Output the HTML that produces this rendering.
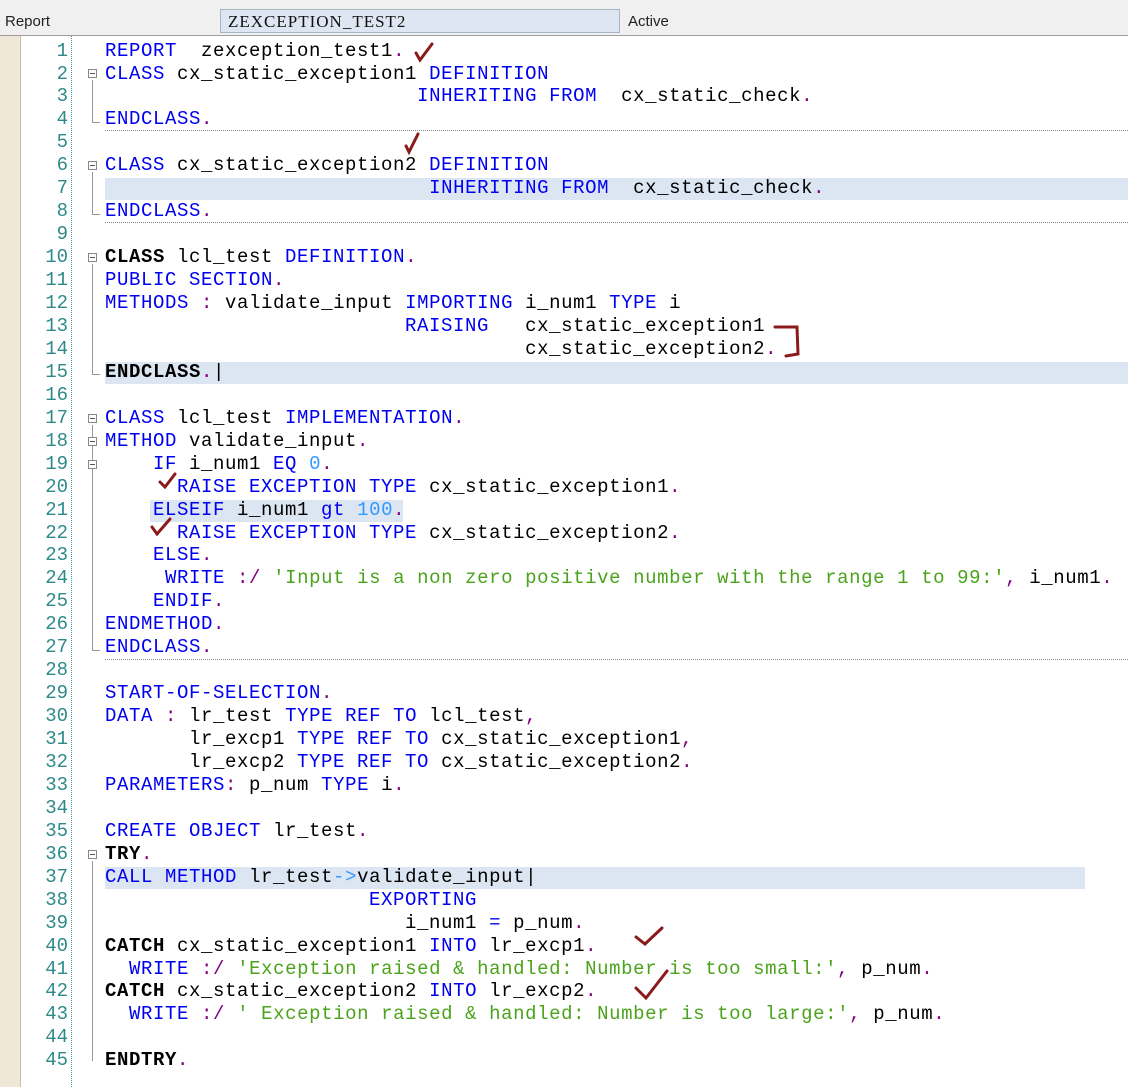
<!DOCTYPE html>
<html><head><meta charset="utf-8"><style>
body{margin:0;width:1128px;height:1087px;background:#fff;overflow:hidden;position:relative;font-family:"Liberation Sans",sans-serif}
#hdr{position:absolute;left:0;top:0;width:1128px;height:35px;background:#f0f0f0;border-bottom:1px solid #a0a0a0}
#hdr .l{position:absolute;top:13px;font-size:15px;color:#222}
#box{position:absolute;left:220px;top:9px;width:400px;height:24px;background:#dde6f2;border:1px solid #a8b4c4;box-sizing:border-box;font-family:"Liberation Serif",serif;font-size:17px;letter-spacing:1px;padding-left:7px;line-height:23px;color:#111}
#gut{position:absolute;left:0;top:36px;width:20px;height:1051px;background:#efe8d8;border-right:1px solid #c9c0a8}
#dots{position:absolute;left:71px;top:36px;height:1051px;border-left:1px dotted #3a9a9a}
.ln{position:absolute;left:20px;width:48px;text-align:right;font-family:"Liberation Mono",monospace;font-size:19px;color:#2e8a8a}
.c{position:absolute;left:105px;white-space:pre;font-family:"Liberation Mono",monospace;font-size:19px;letter-spacing:0.6px;color:#000;height:23px;line-height:23px}
.k{color:#0000f0}.p{color:#800080}.s{color:#4aa31a}.n{color:#3399ff}.b{font-weight:bold}
.hl{position:absolute;background:#dce6f2;height:22px}
.sep{position:absolute;left:105px;right:0;border-top:1px dotted #888}
.fb{position:absolute;left:88px;width:9px;height:9px;border:1px solid #888;background:#fff;box-sizing:border-box}
.fb:after{content:"";position:absolute;left:1px;top:3px;width:5px;height:1px;background:#555}
.vl{position:absolute;left:92px;width:7px;border-left:1px solid #999;border-bottom:1px solid #999}
</style></head><body>
<div id="hdr"><span class="l" style="left:5px">Report</span><div id="box">ZEXCEPTION_TEST2</div><span class="l" style="left:628px">Active</span></div>
<div id="gut"></div><div id="dots"></div>

<div class="hl" style="left:105px;right:0;top:178px"></div>
<div class="hl" style="left:105px;right:0;top:362px"></div>
<div class="hl" style="left:150px;width:253px;top:500px"></div>
<div class="hl" style="left:105px;width:980px;top:867px"></div>
<div class="sep" style="top:130px"></div>
<div class="sep" style="top:222px"></div>
<div class="sep" style="top:659px"></div>

<div class="vl" style="top:80px;height:42px"></div>
<div class="vl" style="top:172px;height:42px"></div>
<div class="vl" style="top:264px;height:110px"></div>
<div class="vl" style="top:425px;height:225px"></div>
<div class="vl" style="top:861px;height:200px;border-bottom:none"></div>
<div class="fb" style="top:69px"></div>
<div class="fb" style="top:161px"></div>
<div class="fb" style="top:253px"></div>
<div class="fb" style="top:414px"></div>
<div class="fb" style="top:437px"></div>
<div class="fb" style="top:460px"></div>
<div class="fb" style="top:850px"></div>

<div id="code"></div>
<script>
var L=[
'<span class="k">REPORT</span>  zexception_test1<span class="p">.</span>',
'<span class="k">CLASS</span> cx_static_exception1 <span class="k">DEFINITION</span>',
'                          <span class="k">INHERITING FROM</span>  cx_static_check<span class="p">.</span>',
'<span class="k">ENDCLASS</span><span class="p">.</span>',
'',
'<span class="k">CLASS</span> cx_static_exception2 <span class="k">DEFINITION</span>',
'                           <span class="k">INHERITING FROM</span>  cx_static_check<span class="p">.</span>',
'<span class="k">ENDCLASS</span><span class="p">.</span>',
'',
'<span class="b">CLASS</span> lcl_test <span class="k">DEFINITION</span><span class="p">.</span>',
'<span class="k">PUBLIC SECTION</span><span class="p">.</span>',
'<span class="k">METHODS</span> <span class="p">:</span> validate_input <span class="k">IMPORTING</span> i_num1 <span class="k">TYPE</span> i',
'                         <span class="k">RAISING</span>   cx_static_exception1',
'                                   cx_static_exception2<span class="p">.</span>',
'<span class="b">ENDCLASS</span><span class="p">.</span>|',
'',
'<span class="k">CLASS</span> lcl_test <span class="k">IMPLEMENTATION</span><span class="p">.</span>',
'<span class="k">METHOD</span> validate_input<span class="p">.</span>',
'    <span class="k">IF</span> i_num1 <span class="k">EQ</span> <span class="n">0</span><span class="p">.</span>',
'      <span class="k">RAISE EXCEPTION TYPE</span> cx_static_exception1<span class="p">.</span>',
'    <span class="k">ELSEIF</span> i_num1 <span class="k">gt</span> <span class="n">100</span><span class="p">.</span>',
'      <span class="k">RAISE EXCEPTION TYPE</span> cx_static_exception2<span class="p">.</span>',
'    <span class="k">ELSE</span><span class="p">.</span>',
'     <span class="k">WRITE</span> <span class="p">:/</span> <span class="s">\'Input is a non zero positive number with the range 1 to 99:\'</span><span class="p">,</span> i_num1<span class="p">.</span>',
'    <span class="k">ENDIF</span><span class="p">.</span>',
'<span class="k">ENDMETHOD</span><span class="p">.</span>',
'<span class="k">ENDCLASS</span><span class="p">.</span>',
'',
'<span class="k">START-OF-SELECTION</span><span class="p">.</span>',
'<span class="k">DATA</span> <span class="p">:</span> lr_test <span class="k">TYPE REF TO</span> lcl_test<span class="p">,</span>',
'       lr_excp1 <span class="k">TYPE REF TO</span> cx_static_exception1<span class="p">,</span>',
'       lr_excp2 <span class="k">TYPE REF TO</span> cx_static_exception2<span class="p">.</span>',
'<span class="k">PARAMETERS</span><span class="p">:</span> p_num <span class="k">TYPE</span> i<span class="p">.</span>',
'',
'<span class="k">CREATE OBJECT</span> lr_test<span class="p">.</span>',
'<span class="b">TRY</span><span class="p">.</span>',
'<span class="k">CALL METHOD</span> lr_test<span class="n">-&gt;</span>validate_input|',
'                      <span class="k">EXPORTING</span>',
'                         i_num1 <span class="k">=</span> p_num<span class="p">.</span>',
'<span class="b">CATCH</span> cx_static_exception1 <span class="k">INTO</span> lr_excp1<span class="p">.</span>',
'  <span class="k">WRITE</span> <span class="p">:/</span> <span class="s">\'Exception raised &amp; handled: Number is too small:\'</span><span class="p">,</span> p_num<span class="p">.</span>',
'<span class="b">CATCH</span> cx_static_exception2 <span class="k">INTO</span> lr_excp2<span class="p">.</span>',
'  <span class="k">WRITE</span> <span class="p">:/</span> <span class="s">\' Exception raised &amp; handled: Number is too large:\'</span><span class="p">,</span> p_num<span class="p">.</span>',
'',
'<span class="b">ENDTRY</span><span class="p">.</span>'];
var h='';for(var i=0;i<L.length;i++){var t=(39.5+i*22.95).toFixed(1);h+='<div class="ln" style="top:'+t+'px;line-height:23px">'+(i+1)+'</div><div class="c" style="top:'+t+'px">'+L[i]+'</div>';}
document.getElementById('code').innerHTML=h;
</script>
<svg style="position:absolute;left:0;top:0" width="1128" height="1087" fill="none" stroke="#8b1a1a" stroke-width="3" stroke-linecap="round">
<path d="M416 53 L420 60 L432 44"/>
<path d="M406 146 L409 152 L418 134"/>
<path d="M160 482 L165 487 L175 474"/>
<path d="M152 527 L157 534 L170 519"/>
<path d="M636 937 L645 944 L662 928"/>
<path d="M636 988 L646 998 L667 971"/>
<path d="M775 327 L797 327 L798 354 L786 356"/>
</svg>
</body></html>
